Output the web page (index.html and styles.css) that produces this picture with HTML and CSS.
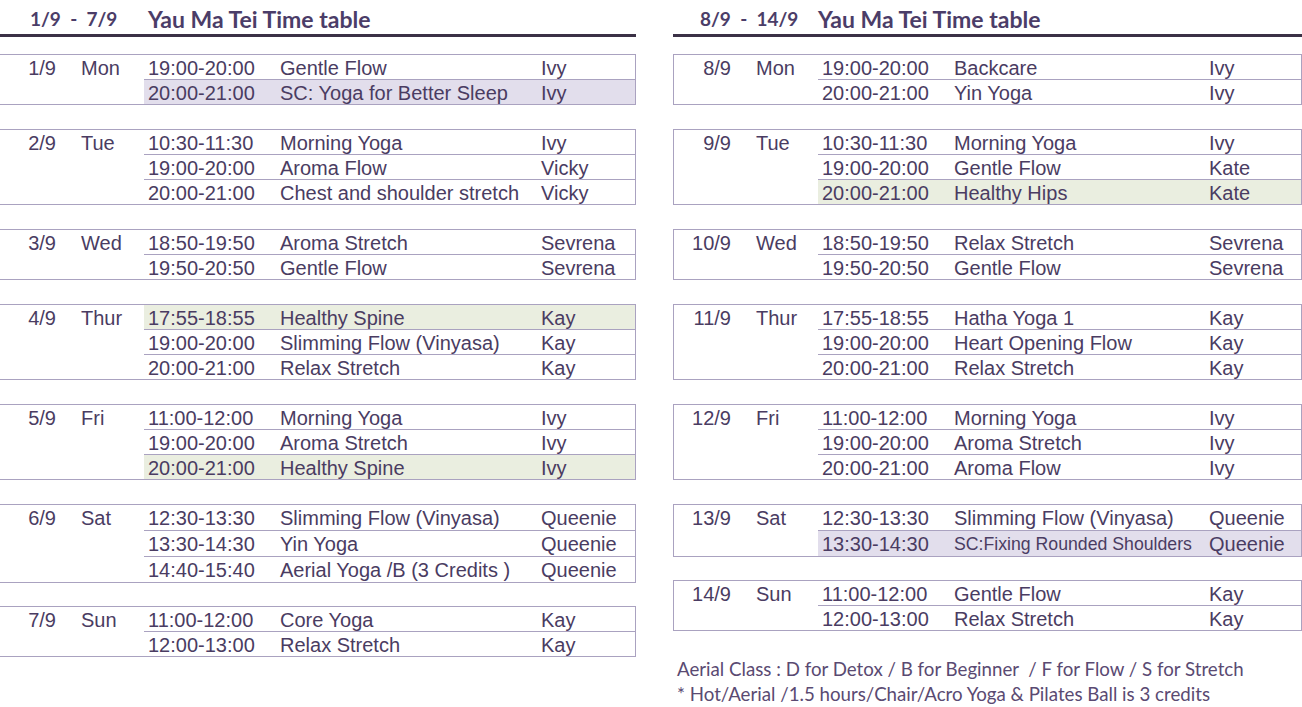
FILE: index.html
```html
<!DOCTYPE html>
<html>
<head>
<meta charset="utf-8">
<link rel="stylesheet" href="styles.css">
</head>
<body>
<div class="page">
  <section class="panel panel-left">
    <header class="head"><span class="range">1/9&nbsp; -&nbsp; 7/9</span><span class="title">Yau Ma Tei Time table</span></header>
    <div class="groups">
      <div class="group">
        <div class="dcell"><span class="date">1/9</span><span class="day">Mon</span></div>
        <div class="rows">
          <div class="row"><span class="t">19:00-20:00</span><span class="c">Gentle Flow</span><span class="p">Ivy</span></div>
          <div class="row sc"><span class="t">20:00-21:00</span><span class="c">SC: Yoga for Better Sleep</span><span class="p">Ivy</span></div>
        </div>
      </div>
      <div class="group">
        <div class="dcell"><span class="date">2/9</span><span class="day">Tue</span></div>
        <div class="rows">
          <div class="row"><span class="t">10:30-11:30</span><span class="c">Morning Yoga</span><span class="p">Ivy</span></div>
          <div class="row"><span class="t">19:00-20:00</span><span class="c">Aroma Flow</span><span class="p">Vicky</span></div>
          <div class="row"><span class="t">20:00-21:00</span><span class="c">Chest and shoulder stretch</span><span class="p">Vicky</span></div>
        </div>
      </div>
      <div class="group">
        <div class="dcell"><span class="date">3/9</span><span class="day">Wed</span></div>
        <div class="rows">
          <div class="row"><span class="t">18:50-19:50</span><span class="c">Aroma Stretch</span><span class="p">Sevrena</span></div>
          <div class="row"><span class="t">19:50-20:50</span><span class="c">Gentle Flow</span><span class="p">Sevrena</span></div>
        </div>
      </div>
      <div class="group">
        <div class="dcell"><span class="date">4/9</span><span class="day">Thur</span></div>
        <div class="rows">
          <div class="row hl"><span class="t">17:55-18:55</span><span class="c">Healthy Spine</span><span class="p">Kay</span></div>
          <div class="row"><span class="t">19:00-20:00</span><span class="c">Slimming Flow (Vinyasa)</span><span class="p">Kay</span></div>
          <div class="row"><span class="t">20:00-21:00</span><span class="c">Relax Stretch</span><span class="p">Kay</span></div>
        </div>
      </div>
      <div class="group">
        <div class="dcell"><span class="date">5/9</span><span class="day">Fri</span></div>
        <div class="rows">
          <div class="row"><span class="t">11:00-12:00</span><span class="c">Morning Yoga</span><span class="p">Ivy</span></div>
          <div class="row"><span class="t">19:00-20:00</span><span class="c">Aroma Stretch</span><span class="p">Ivy</span></div>
          <div class="row hl"><span class="t">20:00-21:00</span><span class="c">Healthy Spine</span><span class="p">Ivy</span></div>
        </div>
      </div>
      <div class="group tall">
        <div class="dcell"><span class="date">6/9</span><span class="day">Sat</span></div>
        <div class="rows">
          <div class="row"><span class="t">12:30-13:30</span><span class="c">Slimming Flow (Vinyasa)</span><span class="p">Queenie</span></div>
          <div class="row"><span class="t">13:30-14:30</span><span class="c">Yin Yoga</span><span class="p">Queenie</span></div>
          <div class="row"><span class="t">14:40-15:40</span><span class="c">Aerial Yoga /B (3 Credits )</span><span class="p">Queenie</span></div>
        </div>
      </div>
      <div class="group after-tall">
        <div class="dcell"><span class="date">7/9</span><span class="day">Sun</span></div>
        <div class="rows">
          <div class="row"><span class="t">11:00-12:00</span><span class="c">Core Yoga</span><span class="p">Kay</span></div>
          <div class="row"><span class="t">12:00-13:00</span><span class="c">Relax Stretch</span><span class="p">Kay</span></div>
        </div>
      </div>
    </div>
  </section>

  <section class="panel panel-right">
    <header class="head"><span class="range">8/9&nbsp; -&nbsp; 14/9</span><span class="title">Yau Ma Tei Time table</span></header>
    <div class="groups">
      <div class="group">
        <div class="dcell"><span class="date">8/9</span><span class="day">Mon</span></div>
        <div class="rows">
          <div class="row"><span class="t">19:00-20:00</span><span class="c">Backcare</span><span class="p">Ivy</span></div>
          <div class="row"><span class="t">20:00-21:00</span><span class="c">Yin Yoga</span><span class="p">Ivy</span></div>
        </div>
      </div>
      <div class="group">
        <div class="dcell"><span class="date">9/9</span><span class="day">Tue</span></div>
        <div class="rows">
          <div class="row"><span class="t">10:30-11:30</span><span class="c">Morning Yoga</span><span class="p">Ivy</span></div>
          <div class="row"><span class="t">19:00-20:00</span><span class="c">Gentle Flow</span><span class="p">Kate</span></div>
          <div class="row hl"><span class="t">20:00-21:00</span><span class="c">Healthy Hips</span><span class="p">Kate</span></div>
        </div>
      </div>
      <div class="group">
        <div class="dcell"><span class="date">10/9</span><span class="day">Wed</span></div>
        <div class="rows">
          <div class="row"><span class="t">18:50-19:50</span><span class="c">Relax Stretch</span><span class="p">Sevrena</span></div>
          <div class="row"><span class="t">19:50-20:50</span><span class="c">Gentle Flow</span><span class="p">Sevrena</span></div>
        </div>
      </div>
      <div class="group">
        <div class="dcell"><span class="date">11/9</span><span class="day">Thur</span></div>
        <div class="rows">
          <div class="row"><span class="t">17:55-18:55</span><span class="c">Hatha Yoga 1</span><span class="p">Kay</span></div>
          <div class="row"><span class="t">19:00-20:00</span><span class="c">Heart Opening Flow</span><span class="p">Kay</span></div>
          <div class="row"><span class="t">20:00-21:00</span><span class="c">Relax Stretch</span><span class="p">Kay</span></div>
        </div>
      </div>
      <div class="group">
        <div class="dcell"><span class="date">12/9</span><span class="day">Fri</span></div>
        <div class="rows">
          <div class="row"><span class="t">11:00-12:00</span><span class="c">Morning Yoga</span><span class="p">Ivy</span></div>
          <div class="row"><span class="t">19:00-20:00</span><span class="c">Aroma Stretch</span><span class="p">Ivy</span></div>
          <div class="row"><span class="t">20:00-21:00</span><span class="c">Aroma Flow</span><span class="p">Ivy</span></div>
        </div>
      </div>
      <div class="group tall">
        <div class="dcell"><span class="date">13/9</span><span class="day">Sat</span></div>
        <div class="rows">
          <div class="row"><span class="t">12:30-13:30</span><span class="c">Slimming Flow (Vinyasa)</span><span class="p">Queenie</span></div>
          <div class="row sc"><span class="t">13:30-14:30</span><span class="c small">SC:Fixing Rounded Shoulders</span><span class="p">Queenie</span></div>
        </div>
      </div>
      <div class="group after-tall">
        <div class="dcell"><span class="date">14/9</span><span class="day">Sun</span></div>
        <div class="rows">
          <div class="row"><span class="t">11:00-12:00</span><span class="c">Gentle Flow</span><span class="p">Kay</span></div>
          <div class="row"><span class="t">12:00-13:00</span><span class="c">Relax Stretch</span><span class="p">Kay</span></div>
        </div>
      </div>
    </div>
    <div class="notes">
      <p>Aerial Class : D for Detox / B for Beginner &nbsp;/ F for Flow / S for Stretch</p>
      <p>* Hot/Aerial /1.5 hours/Chair/Acro Yoga &amp; Pilates Ball is 3 credits</p>
    </div>
  </section>
</div>
</body>
</html>
```

FILE: styles.css
```css
html, body {
  margin: 0;
  padding: 0;
  background: #ffffff;
}

body {
  width: 1302px;
  height: 707px;
  overflow: hidden;
  color: #4a3c62;
  font-family: "Liberation Sans", Arial, sans-serif;
}

.page {
  display: flex;
  gap: 37px;
}

.panel-left {
  width: 636px;
}

.panel-right {
  width: 629px;
}

.head {
  display: flex;
  align-items: flex-end;
  height: 34px;
  border-bottom: 3px solid #3b3146;
  font-family: Lato, "Open Sans", sans-serif;
  font-weight: 700;
  color: #4b3d68;
}

.head .range {
  width: 118px;
  padding-left: 30px;
  font-size: 19px;
  line-height: 28px;
  padding-bottom: 1px;
}

.panel-right .head .range {
  padding-left: 27px;
}

.head .title {
  font-size: 23px;
  line-height: 28px;
  padding-bottom: 1px;
}

.groups {
  display: flex;
  flex-direction: column;
  gap: 24px;
  padding-top: 17px;
}

.group {
  display: flex;
  border: 1px solid #aaa2c0;
  font-size: 20px;
}

.panel-left .group {
  border-left: none;
}

.dcell {
  width: 144px;
  flex: none;
  display: flex;
  height: 24px;
  line-height: 26px;
}

.date {
  width: 56px;
  text-align: right;
  flex: none;
}

.panel-right .date {
  width: 57px;
}

.day {
  margin-left: 25px;
}

.rows {
  flex: 1;
  display: flex;
  flex-direction: column;
}

.row {
  display: flex;
  height: 24px;
  line-height: 26px;
  padding-left: 4px;
}

.row + .row {
  border-top: 1px solid #aaa2c0;
}

.tall .row {
  height: 25px;
}

.after-tall {
  margin-top: -1px;
}

.row .t {
  width: 132px;
  flex: none;
}

.row .c {
  width: 261px;
  flex: none;
  white-space: nowrap;
}

.panel-right .row .c {
  width: 255px;
}

.row .c.small {
  font-size: 17.7px;
}

.row .p {
  flex: 1;
}

.row.sc {
  background: #e2deec;
}

.row.hl {
  background: #eaeee0;
}

.notes {
  padding-left: 4px;
  padding-top: 26px;
  font-family: Lato, "Open Sans", sans-serif;
  font-size: 18.7px;
  color: #5a4a72;
}

.notes p {
  margin: 0;
  line-height: 25px;
  white-space: nowrap;
}
```
